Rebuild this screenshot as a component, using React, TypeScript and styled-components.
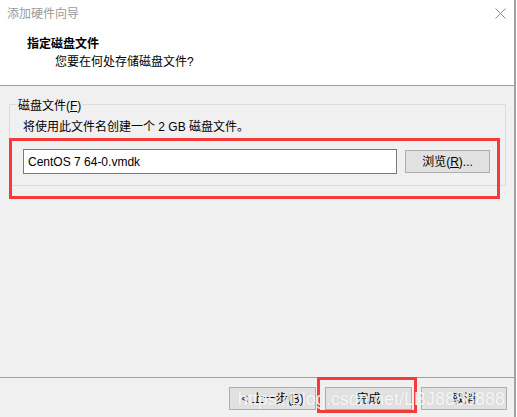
import React from "react";
import styled, { createGlobalStyle } from "styled-components";

const Global = createGlobalStyle`
  html, body { margin: 0; padding: 0; background: #ffffff; }
  body { width: 517px; height: 417px; overflow: hidden; }
  * { box-sizing: border-box; }
`;

const UI_FONT = `"Liberation Sans", "Noto Sans CJK SC", sans-serif`;

const Window = styled.div`
  width: 516px;
  height: 417px;
  display: flex;
  flex-direction: column;
  background: #f0f0f0;
  border-right: 2px solid #a2a2a2;
  font-family: ${UI_FONT};
  font-size: 12px;
  color: #000;
  position: relative;
`;

const TitleBar = styled.div`
  height: 28px;
  background: #fff;
  display: flex;
  align-items: center;
  justify-content: space-between;
  padding: 0 8px 0 7px;
`;

const TitleText = styled.span`
  color: #9a9a9a;
  font-size: 12px;
  line-height: 16px;
`;

const CloseIcon = styled.svg`
  width: 11px;
  height: 11px;
  margin-top: -1px;
`;

const Header = styled.div`
  height: 58px;
  background: #fff;
  border-bottom: 1px solid #a0a0a0;
  padding: 8px 0 0 27px;
  display: flex;
  flex-direction: column;
  gap: 2px;
`;

const Heading = styled.div`
  font-weight: bold;
  font-size: 12px;
  line-height: 16px;
`;

const Subtitle = styled.div`
  font-size: 12px;
  line-height: 16px;
  padding-left: 28px;
`;

const Body = styled.div`
  flex: 1;
  padding: 18px 0 0 9px;
`;

const GroupBox = styled.div`
  width: 497px;
  height: 82px;
  border: 1px solid #dcdcdc;
  padding: 0 0 0 13px;
`;

const Legend = styled.div`
  display: table;
  margin: -7px 0 0 -6px;
  padding: 0 1px;
  background: #f0f0f0;
  line-height: 16px;
`;

const Description = styled.div`
  line-height: 16px;
  margin-top: 5px;
`;

const InputRow = styled.div`
  position: relative;
  display: flex;
  align-items: center;
  gap: 8px;
  margin-top: 14px;
  height: 25px;
`;

const TextBox = styled.div`
  width: 374px;
  height: 25px;
  background: #fff;
  border: 1px solid #7a7a7a;
  padding: 0 0 0 4px;
  display: flex;
  align-items: center;
  font-size: 12px;
`;

const Button = styled.div<{ $w?: number }>`
  width: ${(p) => p.$w ?? 86}px;
  height: 23px;
  background: #e1e1e1;
  border: 1px solid #adadad;
  display: flex;
  align-items: center;
  justify-content: center;
  font-size: 12px;
  line-height: 16px;
  white-space: pre;
`;

const Mnemonic = styled.span`
  text-decoration: underline;
`;

const Arrow = styled.span`
  color: #1a4f9a;
`;

const RedFrame = styled.div<{ $t: number; $l: number; $w: number; $h: number }>`
  position: absolute;
  top: ${(p) => p.$t}px;
  left: ${(p) => p.$l}px;
  width: ${(p) => p.$w}px;
  height: ${(p) => p.$h}px;
  border: 3px solid #f53a3a;
  pointer-events: none;
`;

const Footer = styled.div`
  height: 40px;
  border-top: 1px solid #a0a0a0;
  padding: 9px 7px 0 0;
  display: flex;
  justify-content: flex-end;
  gap: 9px;
  position: relative;
`;

const ButtonSlot = styled.div`
  position: relative;
`;

const Watermark = styled.div`
  position: absolute;
  right: 9px;
  top: 10px;
  font-family: "Liberation Sans", Arial, sans-serif;
  font-size: 18px;
  line-height: 22px;
  color: rgba(255, 255, 255, 0.85);
  text-shadow: 0 0 1px rgba(150, 150, 150, 0.35);
  pointer-events: none;
  white-space: nowrap;
`;

export default function App() {
  return (
    <>
      <Global />
      <Window>
        <TitleBar>
          <TitleText>添加硬件向导</TitleText>
          <CloseIcon viewBox="0 0 11 11">
            <path d="M0.5 0.5 L10.5 10.5 M10.5 0.5 L0.5 10.5" stroke="#8c8c8c" strokeWidth="1" fill="none" />
          </CloseIcon>
        </TitleBar>
        <Header>
          <Heading>指定磁盘文件</Heading>
          <Subtitle>您要在何处存储磁盘文件?</Subtitle>
        </Header>
        <Body>
          <GroupBox>
            <Legend>
              磁盘文件(<Mnemonic>F</Mnemonic>)
            </Legend>
            <Description>将使用此文件名创建一个 2 GB 磁盘文件。</Description>
            <InputRow>
              <TextBox>CentOS 7 64-0.vmdk</TextBox>
              <Button $w={85}>
                浏览(<Mnemonic>R</Mnemonic>)...
              </Button>
              <RedFrame $t={-11} $l={-14} $w={491} $h={61} />
            </InputRow>
          </GroupBox>
        </Body>
        <Footer>
          <Button $w={87}>
            <Arrow>&lt;</Arrow> 上一步(<Mnemonic>B</Mnemonic>)
          </Button>
          <ButtonSlot>
            <Button $w={87}>完成</Button>
            <RedFrame $t={-10} $l={-8} $w={100} $h={36} />
          </ButtonSlot>
          <Button $w={86}>取消</Button>
          <Watermark>https://blog.csdn.net/LBJ8888888</Watermark>
        </Footer>
      </Window>
    </>
  );
}
